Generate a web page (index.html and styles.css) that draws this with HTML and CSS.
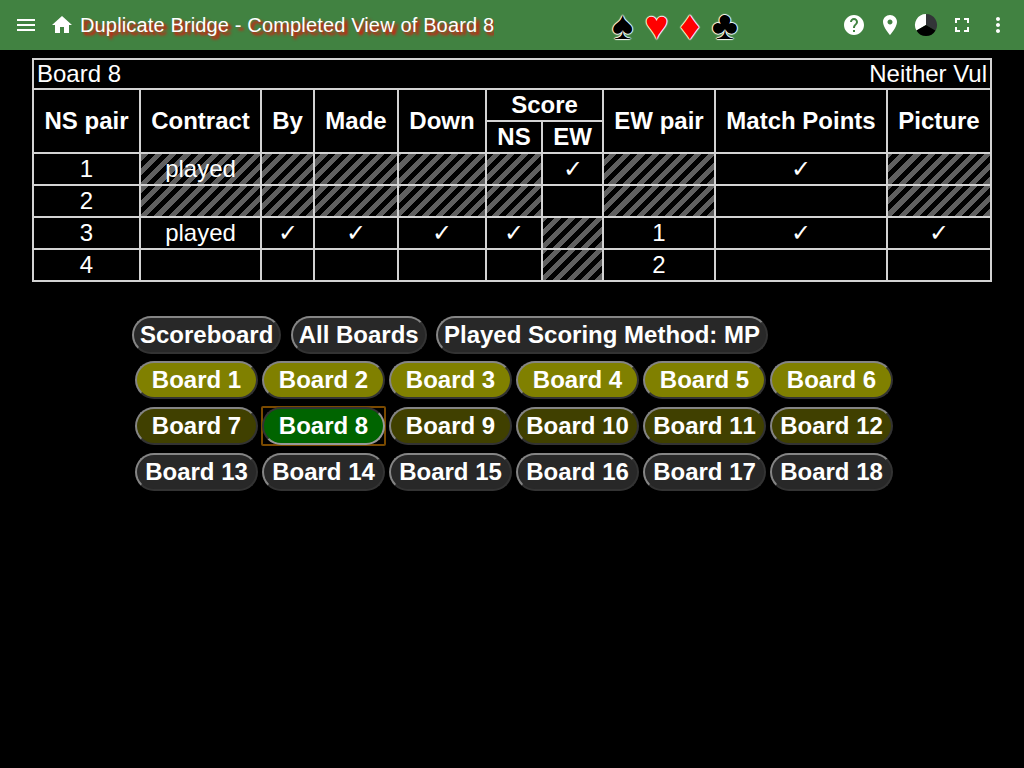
FILE: index.html
```
<!DOCTYPE html>
<html lang="en">
<head>
<meta charset="utf-8">
<title>Duplicate Bridge</title>
<link rel="stylesheet" href="styles.css">
</head>
<body>
<header class="bar">
  <svg class="icon menu" viewBox="0 0 24 24"><path d="M3 18h18v-2H3v2zm0-5h18v-2H3v2zm0-7v2h18V6H3z"/></svg>
  <svg class="icon home" viewBox="0 0 24 24"><path d="M10 20v-6h4v6h5v-8h3L12 3 2 12h3v8z"/></svg>
  <h1 class="title">Duplicate Bridge - Completed View of Board 8</h1>
  <div class="suits">♠ <span class="red">♥</span> <span class="red">♦</span> ♣</div>
  <nav class="tools">
    <svg class="icon" viewBox="0 0 24 24"><path d="M12 2C6.480 2 2 6.480 2 12s4.480 10 10 10 10-4.480 10-10S17.520 2 12 2zm1 17h-2v-2h2v2zm2.070-7.750l-.9.920C13.450 12.900 13 13.500 13 15h-2v-.5c0-1.100.450-2.100 1.170-2.830l1.240-1.260c.370-.360.590-.860.590-1.410 0-1.100-.9-2-2-2s-2 .9-2 2H8c0-2.210 1.790-4 4-4s4 1.790 4 4c0 .880-.360 1.680-.930 2.250z"/></svg>
    <svg class="icon" viewBox="0 0 24 24"><path d="M12 2C8.130 2 5 5.130 5 9c0 5.250 7 13 7 13s7-7.750 7-13c0-3.870-3.130-7-7-7zm0 9.500c-1.380 0-2.500-1.120-2.500-2.500s1.120-2.500 2.500-2.500 2.500 1.120 2.500 2.500-1.120 2.500-2.500 2.500z"/></svg>
    <svg class="icon" viewBox="0 0 24 24"><path d="M12 12V1A11 11 0 0 0 2.470 17.500Z"/><path class="pie-gray" d="M12 12V1A11 11 0 0 1 21.530 17.500Z"/><path class="pie-black" d="M12 12L2.470 17.500A11 11 0 0 0 21.530 17.500Z"/></svg>
    <svg class="icon" viewBox="0 0 24 24"><path d="M7 14H5v5h5v-2H7v-3zm-2-4h2V7h3V5H5v5zm12 7h-3v2h5v-5h-2v3zM14 5v2h3v3h2V5h-5z"/></svg>
    <svg class="icon" viewBox="0 0 24 24"><path d="M12 8c1.100 0 2-.9 2-2s-.9-2-2-2-2 .9-2 2 .9 2 2 2zm0 2c-1.100 0-2 .9-2 2s.9 2 2 2 2-.9 2-2-.9-2-2-2zm0 6c-1.100 0-2 .9-2 2s.9 2 2 2 2-.9 2-2-.9-2-2-2z"/></svg>
  </nav>
</header>
<main>
  <table class="board">
    <colgroup><col class="c1"><col class="c2"><col class="c3"><col class="c4"><col class="c5"><col class="c6"><col class="c7"><col class="c8"><col class="c9"><col class="c10"></colgroup>
    <thead>
      <tr class="caption"><td colspan="10"><div class="caption-line"><span>Board 8</span><span>Neither Vul</span></div></td></tr>
      <tr><th rowspan="2">NS pair</th><th rowspan="2">Contract</th><th rowspan="2">By</th><th rowspan="2">Made</th><th rowspan="2">Down</th><th colspan="2">Score</th><th rowspan="2">EW pair</th><th rowspan="2">Match Points</th><th rowspan="2">Picture</th></tr>
      <tr><th>NS</th><th>EW</th></tr>
    </thead>
    <tbody>
      <tr><td>1</td><td class="na">played</td><td class="na"></td><td class="na"></td><td class="na"></td><td class="na"></td><td>✓</td><td class="na"></td><td>✓</td><td class="na"></td></tr>
      <tr><td>2</td><td class="na"></td><td class="na"></td><td class="na"></td><td class="na"></td><td class="na"></td><td></td><td class="na"></td><td></td><td class="na"></td></tr>
      <tr><td>3</td><td>played</td><td>✓</td><td>✓</td><td>✓</td><td>✓</td><td class="na"></td><td>1</td><td>✓</td><td>✓</td></tr>
      <tr><td>4</td><td></td><td></td><td></td><td></td><td></td><td class="na"></td><td>2</td><td></td><td></td></tr>
    </tbody>
  </table>
  <div class="actions"><button class="btn">Scoreboard</button><button class="btn">All Boards</button><button class="btn">Played Scoring Method: MP</button></div>
  <div class="boards">
    <button class="btn done">Board 1</button><button class="btn done">Board 2</button><button class="btn done">Board 3</button><button class="btn done">Board 4</button><button class="btn done">Board 5</button><button class="btn done">Board 6</button>
    <button class="btn partial">Board 7</button><button class="btn current">Board 8</button><button class="btn partial">Board 9</button><button class="btn partial">Board 10</button><button class="btn partial">Board 11</button><button class="btn partial">Board 12</button>
    <button class="btn">Board 13</button><button class="btn">Board 14</button><button class="btn">Board 15</button><button class="btn">Board 16</button><button class="btn">Board 17</button><button class="btn">Board 18</button>
  </div>
</main>
</body>
</html>
```
FILE: styles.css
```
* { box-sizing: border-box; }
body {
  margin: 0;
  background: #000;
  color: #fff;
  font-family: "Liberation Sans", Arial, sans-serif;
  font-size: 24px;
}
.bar {
  height: 50px;
  display: flex;
  align-items: center;
  background: #418241;
  padding: 0 14px;
}
.icon { width: 24px; height: 24px; fill: #fff; flex: none; }
.home { margin-left: 12px; }
.title {
  margin: 0 0 0 6px;
  width: 414px;
  height: 50px;
  line-height: 50px;
  font-size: 20px;
  letter-spacing: 0.15px;
  font-weight: 400;
  white-space: nowrap;
  overflow: hidden;
  text-shadow: 3px 3px 3px #f00;
}
.suits {
  margin-left: 118px;
  line-height: 50px;
  font-size: 40px;
  letter-spacing: 0.15px;
  color: #000;
  white-space: nowrap;
  text-shadow: -1px 0 1px #fff, 1px 0 1px #fff, 0 -1px 1px #fff, 0 1px 1px #fff;
}
.red { color: #f00; }
.tools { display: flex; gap: 12px; margin-left: auto; }
.pie-gray { fill: #333538; }
.pie-black { fill: #000; }
.board {
  margin: 8px 32px 0;
  width: 960px;
  table-layout: fixed;
  border-collapse: collapse;
}
.c1 { width: 107px; } .c2 { width: 121px; } .c3 { width: 53px; } .c4 { width: 84px; } .c5 { width: 88px; }
.c6 { width: 56px; } .c7 { width: 61px; } .c8 { width: 112px; } .c9 { width: 172px; } .c10 { width: 104px; }
.board tr { height: 32px; }
.board .caption { height: 30px; }
.board td, .board th {
  padding: 0;
  border: 2px solid lightgray;
  text-align: center;
  line-height: 28px;
  white-space: nowrap;
}
.board .na { background: repeating-linear-gradient(-45deg, #606060, #606060 5px, #000 5px, #000 10px); }
.caption-line { display: flex; justify-content: space-between; padding: 0 3px; }
.btn {
  height: 38px;
  padding: 0 6px;
  border: 2px solid;
  border-color: #858585 #333 #333 #858585;
  border-radius: 19px;
  background: #282828;
  color: #fff;
  font: bold 24px "Liberation Sans", Arial, sans-serif;
  font-kerning: none;
  white-space: nowrap;
}
.actions { display: flex; gap: 9.300px; margin: 34px 0 0 132px; }
.boards {
  display: grid;
  grid-template-columns: repeat(6, 123px);
  gap: 8px 4px;
  margin: 7px 0 0 135px;
}
.done { background: #808000; }
.partial { background: #404000; }
.current {
  position: relative;
  background: #006400;
  border-color: #333 #999 #999 #333;
}
.current::after {
  content: "";
  position: absolute;
  inset: -3px;
  border: 2px solid #7a4a00;
  border-radius: 2px;
  z-index: -1;
}
.boards { position: relative; z-index: 0; }
.current { z-index: auto; }
```
